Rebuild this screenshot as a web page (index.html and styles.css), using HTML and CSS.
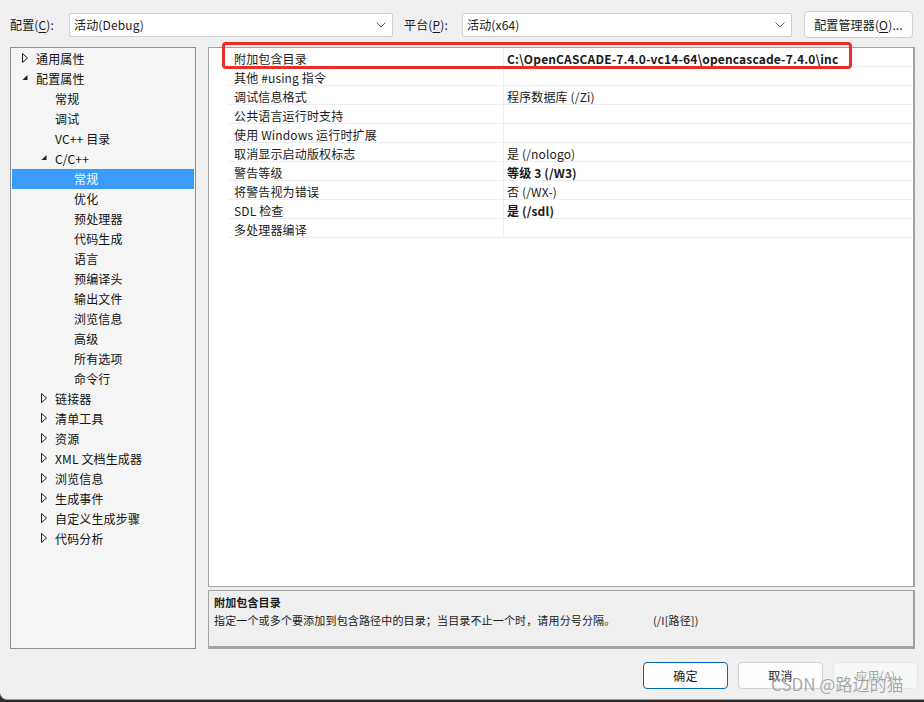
FILE: index.html
```html
<!DOCTYPE html>
<html lang="zh-CN">
<head>
<meta charset="utf-8">
<title>属性页</title>
<link rel="stylesheet" href="styles.css">
</head>
<body>
<div class="window">
  <div class="topbar">
    <span class="lbl lbl-config">配置(<u>C</u>):</span>
    <div class="combo combo-config"><span>活动(Debug)</span><svg class="chev" width="10" height="6" viewBox="0 0 10 6"><path d="M0.5 0.5 L5 5 L9.5 0.5" fill="none" stroke="#5a5a5a" stroke-width="1"/></svg></div>
    <span class="lbl lbl-platform">平台(<u>P</u>):</span>
    <div class="combo combo-platform"><span>活动(x64)</span><svg class="chev" width="10" height="6" viewBox="0 0 10 6"><path d="M0.5 0.5 L5 5 L9.5 0.5" fill="none" stroke="#5a5a5a" stroke-width="1"/></svg></div>
    <div class="btn btn-manager">配置管理器(<u>O</u>)...</div>
  </div>

  <div class="main">
    <div class="tree">
      <div class="node l0"><span class="arrow"><svg width="7" height="10" viewBox="0 0 7 10"><path d="M0.5 0.5 L5.5 5 L0.5 9.5 Z" fill="none" stroke="#1e1e1e" stroke-width="1"/></svg></span>通用属性</div>
      <div class="node l0"><span class="arrow"><svg width="7" height="10" viewBox="0 0 7 10"><path d="M5.5 2 L5.5 7 L0.5 7 Z" fill="#1e1e1e"/></svg></span>配置属性</div>
      <div class="node l1"><span class="arrow"></span>常规</div>
      <div class="node l1"><span class="arrow"></span>调试</div>
      <div class="node l1"><span class="arrow"></span>VC++ 目录</div>
      <div class="node l1"><span class="arrow"><svg width="7" height="10" viewBox="0 0 7 10"><path d="M5.5 2 L5.5 7 L0.5 7 Z" fill="#1e1e1e"/></svg></span>C/C++</div>
      <div class="node l2 selected"><span class="arrow"></span>常规</div>
      <div class="node l2"><span class="arrow"></span>优化</div>
      <div class="node l2"><span class="arrow"></span>预处理器</div>
      <div class="node l2"><span class="arrow"></span>代码生成</div>
      <div class="node l2"><span class="arrow"></span>语言</div>
      <div class="node l2"><span class="arrow"></span>预编译头</div>
      <div class="node l2"><span class="arrow"></span>输出文件</div>
      <div class="node l2"><span class="arrow"></span>浏览信息</div>
      <div class="node l2"><span class="arrow"></span>高级</div>
      <div class="node l2"><span class="arrow"></span>所有选项</div>
      <div class="node l2"><span class="arrow"></span>命令行</div>
      <div class="node l1"><span class="arrow"><svg width="7" height="10" viewBox="0 0 7 10"><path d="M0.5 0.5 L5.5 5 L0.5 9.5 Z" fill="none" stroke="#1e1e1e" stroke-width="1"/></svg></span>链接器</div>
      <div class="node l1"><span class="arrow"><svg width="7" height="10" viewBox="0 0 7 10"><path d="M0.5 0.5 L5.5 5 L0.5 9.5 Z" fill="none" stroke="#1e1e1e" stroke-width="1"/></svg></span>清单工具</div>
      <div class="node l1"><span class="arrow"><svg width="7" height="10" viewBox="0 0 7 10"><path d="M0.5 0.5 L5.5 5 L0.5 9.5 Z" fill="none" stroke="#1e1e1e" stroke-width="1"/></svg></span>资源</div>
      <div class="node l1"><span class="arrow"><svg width="7" height="10" viewBox="0 0 7 10"><path d="M0.5 0.5 L5.5 5 L0.5 9.5 Z" fill="none" stroke="#1e1e1e" stroke-width="1"/></svg></span>XML 文档生成器</div>
      <div class="node l1"><span class="arrow"><svg width="7" height="10" viewBox="0 0 7 10"><path d="M0.5 0.5 L5.5 5 L0.5 9.5 Z" fill="none" stroke="#1e1e1e" stroke-width="1"/></svg></span>浏览信息</div>
      <div class="node l1"><span class="arrow"><svg width="7" height="10" viewBox="0 0 7 10"><path d="M0.5 0.5 L5.5 5 L0.5 9.5 Z" fill="none" stroke="#1e1e1e" stroke-width="1"/></svg></span>生成事件</div>
      <div class="node l1"><span class="arrow"><svg width="7" height="10" viewBox="0 0 7 10"><path d="M0.5 0.5 L5.5 5 L0.5 9.5 Z" fill="none" stroke="#1e1e1e" stroke-width="1"/></svg></span>自定义生成步骤</div>
      <div class="node l1"><span class="arrow"><svg width="7" height="10" viewBox="0 0 7 10"><path d="M0.5 0.5 L5.5 5 L0.5 9.5 Z" fill="none" stroke="#1e1e1e" stroke-width="1"/></svg></span>代码分析</div>
    </div>

    <div class="right">
      <div class="grid">
        <div class="prow"><div class="gutter"></div><div class="pname">附加包含目录</div><div class="pval bold">C:\OpenCASCADE-7.4.0-vc14-64\opencascade-7.4.0\inc</div></div>
        <div class="prow"><div class="gutter"></div><div class="pname">其他 #using 指令</div><div class="pval"></div></div>
        <div class="prow"><div class="gutter"></div><div class="pname">调试信息格式</div><div class="pval">程序数据库 (/Zi)</div></div>
        <div class="prow"><div class="gutter"></div><div class="pname">公共语言运行时支持</div><div class="pval"></div></div>
        <div class="prow"><div class="gutter"></div><div class="pname">使用 Windows 运行时扩展</div><div class="pval"></div></div>
        <div class="prow"><div class="gutter"></div><div class="pname">取消显示启动版权标志</div><div class="pval">是 (/nologo)</div></div>
        <div class="prow"><div class="gutter"></div><div class="pname">警告等级</div><div class="pval bold">等级 3 (/W3)</div></div>
        <div class="prow"><div class="gutter"></div><div class="pname">将警告视为错误</div><div class="pval">否 (/WX-)</div></div>
        <div class="prow"><div class="gutter"></div><div class="pname">SDL 检查</div><div class="pval bold">是 (/sdl)</div></div>
        <div class="prow"><div class="gutter"></div><div class="pname">多处理器编译</div><div class="pval"></div></div>
      </div>
      <div class="desc">
        <div class="desc-title">附加包含目录</div>
        <div class="desc-line"><span class="desc-body">指定一个或多个要添加到包含路径中的目录；当目录不止一个时，请用分号分隔。</span><span>(/I[路径])</span></div>
      </div>
    </div>
  </div>

  <div class="footer">
    <div class="btn btn-ok">确定</div>
    <div class="btn">取消</div>
    <div class="btn btn-disabled">应用(A)</div>
  </div>

  <div class="highlight"></div>
  <div class="watermark">CSDN @路边的猫</div>
</div>
</body>
</html>
```

FILE: styles.css
```css
* { box-sizing: border-box; }

html, body {
  margin: 0;
  padding: 0;
}

body {
  width: 924px;
  height: 702px;
  overflow: hidden;
  background: #2a2a2a;
  font-family: "Noto Sans CJK SC", "Noto Sans", sans-serif;
  font-size: 12px;
  letter-spacing: 0.15px;
  color: #1a1a1a;
}

.window {
  position: relative;
  width: 924px;
  height: 700px;
  background: #efefef;
  border-bottom-left-radius: 7px;
  border-bottom: 1px solid #9a9a9a;
}

u { text-decoration: underline; text-underline-offset: 2px; }

/* top bar */
.topbar {
  display: flex;
  align-items: center;
  height: 38px;
  padding: 11px 0 0 10px;
}

.lbl { display: inline-block; line-height: 16px; }
.lbl-config { width: 59px; }
.lbl-platform { width: 58px; margin-left: 11px; }

.combo {
  height: 24px;
  display: flex;
  align-items: center;
  justify-content: space-between;
  padding: 0 6px 0 4px;
  background: #fff;
  border: 1px solid #cfcfcf;
  border-radius: 2px;
}
.combo-config { width: 324px; }
.combo-platform { width: 330px; }
.chev { margin-top: 1px; }

.btn {
  display: flex;
  align-items: center;
  justify-content: center;
  height: 27px;
  width: 85px;
  background: #fdfdfd;
  border: 1px solid #d0d0d0;
  border-radius: 4px;
}
.btn-manager { width: 109px; margin-left: 12px; }

/* main */
.main {
  display: flex;
  margin-top: 9px;
}

.tree {
  width: 186px;
  height: 602px;
  margin-left: 10px;
  padding-top: 1px;
  background: #f5f5f5;
  border: 1px solid #8d8e96;
}

.node {
  display: flex;
  align-items: center;
  height: 20px;
  padding-bottom: 2px;
  margin: 0 1px;
  color: #111;
  white-space: nowrap;
}
.node.l0 { padding-left: 10px; }
.node.l1 { padding-left: 29px; }
.node.l2 { padding-left: 48px; }
.arrow {
  display: flex;
  align-items: center;
  width: 14px;
  height: 18px;
}
.node.selected {
  background: #3a9bfb;
  color: #fff;
}

.right {
  display: flex;
  flex-direction: column;
  width: 707px;
  margin-left: 12px;
}

.grid {
  height: 540px;
  background: #fff;
  border: 1px solid #a2a2a2;
  border-right-width: 2px;
}

.prow {
  display: flex;
  height: 19px;
}
.gutter { width: 20px; }
.pname, .pval {
  height: 19px;
  padding-top: 2px;
  line-height: 17px;
  border-bottom: 1px solid #eeeef2;
  white-space: nowrap;
}
.pname {
  width: 275px;
  padding-left: 5px;
  border-right: 1px solid #eeeef2;
}
.pval {
  flex: 1;
  padding-left: 3px;
}
.bold { font-weight: 700; }

.desc {
  height: 59px;
  margin-top: 3px;
  padding: 2px 5px;
  font-size: 11px;
  background: #efefef;
  border: 1px solid #a2a2a2;
  border-right-width: 2px;
  border-bottom: 3px solid #a2a2a2;
}
.desc-title { font-weight: 700; line-height: 18px; }
.desc-line { display: flex; line-height: 18px; }
.desc-body { width: 439px; white-space: nowrap; }

/* footer */
.footer {
  display: flex;
  justify-content: flex-end;
  gap: 10px;
  margin-top: 13px;
  padding-right: 6px;
}
.btn-ok { border-color: #0067c0; }
.btn-disabled {
  background: #f6f6f6;
  border-color: #e6e6e6;
  color: #a8a8a8;
}

/* overlays */
.highlight {
  position: absolute;
  left: 222px;
  top: 42px;
  width: 630px;
  height: 27px;
  border: 3px solid #ea2f28;
  border-radius: 4px;
}

.watermark {
  position: absolute;
  left: 771px;
  top: 671px;
  font-size: 17px;
  letter-spacing: 0;
  color: rgba(140, 140, 140, 0.75);
  text-shadow: 0 0 2px rgba(255, 255, 255, 0.8);
  white-space: nowrap;
}
```
